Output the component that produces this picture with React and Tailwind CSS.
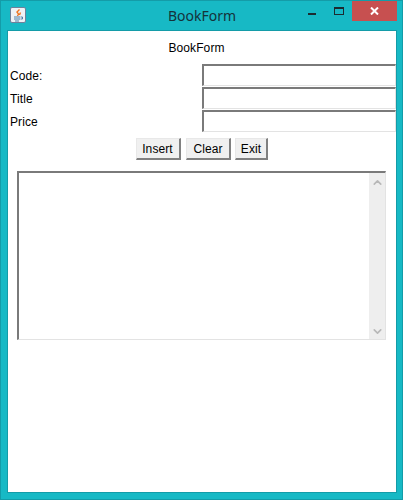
import { ChevronUp, ChevronDown } from 'lucide-react'

const ROWS = ['Code:', 'Title', 'Price']
const BUTTONS = [
  { label: 'Insert', cls: 'w-[45px]' },
  { label: 'Clear', cls: 'w-[45px] ml-[5px] pl-px' },
  { label: 'Exit', cls: 'w-[33px] ml-[4px] pl-px' },
]

function JavaIcon() {
  return (
    <div className="w-4 h-4 rounded-[2px] border border-[#6f819b] bg-[#eef2f6] flex items-center justify-center">
      <svg width="12" height="13" viewBox="0 0 12 13">
        <path d="M7.5 0.5 L5 3 L6.5 5 L5.5 7 M8.5 3.5 L7.5 6" stroke="#ee7420" strokeWidth="1.4" fill="none" />
        <path d="M2 8 H8 M2 10 H8 M3 12 H7" stroke="#4f80a8" strokeWidth="1" fill="none" />
        <path d="M8.5 8 H10.5 V10 H8.5" stroke="#4f80a8" strokeWidth="1" fill="none" />
      </svg>
    </div>
  )
}

export default function App() {
  return (
    <div className="w-[403px] h-[500px] bg-[#17b9c5] border border-[#149ca8] font-['Liberation_Sans',Arial,sans-serif] text-[12px] tracking-[0.1px] text-black flex flex-col overflow-hidden">
      <div className="h-[29px] shrink-0 flex items-start relative">
        <div className="ml-[9px] mt-[6px]"><JavaIcon /></div>
        <div className="absolute left-0 right-[-1px] top-[5px] text-center text-[14px] leading-[20px] tracking-normal text-[#15323a] font-['Noto_Sans',sans-serif]">BookForm</div>
        <div className="ml-auto flex items-start mr-[5px]">
          <div className="w-[8px] h-[2px] bg-[#1c2b30] mt-[12px] mr-[18px]" />
          <div className="w-[10px] h-[8px] border border-[#1c2b30] border-t-2 mt-[6px] mr-[8px]" />
          <div className="w-[45px] h-[20px] bg-[#c75050] text-white flex items-center justify-center">
            <svg width="9" height="8" viewBox="0 0 9 8"><path d="M1 0.5 L8 7.5 M8 0.5 L1 7.5" stroke="#fff" strokeWidth="2" /></svg>
          </div>
        </div>
      </div>

      <div className="mx-[6px] bg-white border border-[#149ca8] h-[463px] w-[390px] flex flex-col">
        <div className="h-[33px] shrink-0 pt-[10px] pr-[11px] text-center leading-[14px]">BookForm</div>
        <div className="flex flex-col gap-px">
          {ROWS.map(label => (
            <div key={label} className="flex items-center h-[22px]">
              <span className="w-[194px] pl-[2px] pt-[2px] leading-[14px]">{label}</span>
              <div className="w-[194px] h-[22px] border-2 border-[#7a7a7a] border-r border-b border-r-[#e3e3e3] border-b-[#e3e3e3] bg-white" />
            </div>
          ))}
        </div>
        <div className="flex justify-center mt-[6px] pr-[1px]">
          {BUTTONS.map(b => (
            <div key={b.label} className={`${b.cls} h-[22px] flex items-center justify-center bg-[#f0f0f0] border border-[#e8e8e8] border-r-2 border-b-2 border-r-[#808080] border-b-[#808080] leading-[14px]`}>{b.label}</div>
          ))}
        </div>
        <div className="ml-[9px] mt-[11px] w-[369px] h-[169px] border-2 border-[#7a7a7a] border-r border-b border-r-[#e3e3e3] border-b-[#e3e3e3] flex justify-end">
          <div className="w-[16px] bg-[#eeeeee] flex flex-col items-center justify-between pt-[3px] pb-px text-[#b8b8b8]">
            <ChevronUp size={13} strokeWidth={3} />
            <ChevronDown size={13} strokeWidth={3} />
          </div>
        </div>
      </div>
    </div>
  )
}
